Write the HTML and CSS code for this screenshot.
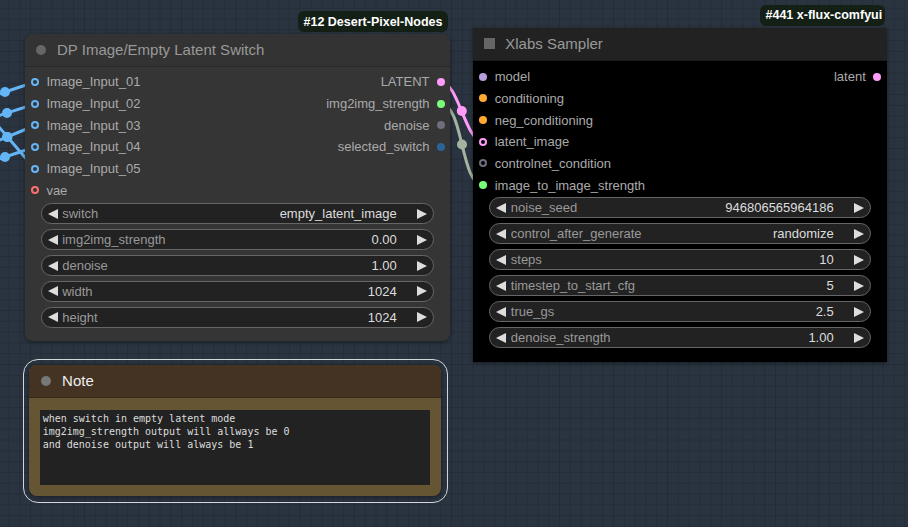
FILE: index.html
```html
<!DOCTYPE html>
<html>
<head>
<meta charset="utf-8">
<link rel="stylesheet" href="styles.css">
</head>
<body>
<div class="canvas">
  <svg class="wires" width="908" height="527" viewBox="0 0 908 527">
    <g fill="none" stroke-width="3" stroke-linecap="round">
      <path d="M-25 102 L35 82" stroke="#64b5f6"/>
      <path d="M-21 122 L35 104" stroke="#64b5f6"/>
      <path d="M-21 148.5 L35 125.5" stroke="#64b5f6"/>
      <path d="M-25 167 L35 147" stroke="#64b5f6"/>
      <path d="M-20 105 L35 169" stroke="#64b5f6"/>
      <path d="M440.7 82 C458.7 82 465 141.7 483.3 141.7" stroke="#ff9cf9"/>
      <path d="M440.7 104 C463.7 104 460.3 185.3 483.3 185.3" stroke="#a3b39e"/>
    </g>
    <g>
      <circle cx="5" cy="92" r="5" fill="#64b5f6"/>
      <circle cx="7" cy="113" r="5" fill="#64b5f6"/>
      <circle cx="7" cy="137" r="5" fill="#64b5f6"/>
      <circle cx="7.5" cy="137" r="5" fill="#64b5f6"/>
      <circle cx="5" cy="157" r="5" fill="#64b5f6"/>
      <circle cx="461.8" cy="111" r="5" fill="#ff9cf9"/>
      <circle cx="462" cy="144.5" r="5" fill="#a3b39e"/>
    </g>
  </svg>

  <div class="badge badge-dp">#12 Desert-Pixel-Nodes</div>
  <div class="node node-dp">
    <div class="node-title"><span class="title-dot"></span><span class="title-text">DP Image/Empty Latent Switch</span></div>
    <div class="node-body">
      <div class="slots">
        <div class="col-in">
          <div class="slot"><span class="pin ring c-image"></span>Image_Input_01</div>
          <div class="slot"><span class="pin ring c-image"></span>Image_Input_02</div>
          <div class="slot"><span class="pin ring c-image"></span>Image_Input_03</div>
          <div class="slot"><span class="pin ring c-image"></span>Image_Input_04</div>
          <div class="slot"><span class="pin ring c-image"></span>Image_Input_05</div>
          <div class="slot"><span class="pin ring c-vae"></span>vae</div>
        </div>
        <div class="col-out">
          <div class="slot out">LATENT<span class="pin c-latent"></span></div>
          <div class="slot out">img2img_strength<span class="pin c-float"></span></div>
          <div class="slot out">denoise<span class="pin c-grey"></span></div>
          <div class="slot out">selected_switch<span class="pin c-blue"></span></div>
        </div>
      </div>
      <div class="widgets w-dp">
        <div class="widget"><span class="arr-l"></span><span class="w-label">switch</span><span class="w-value">empty_latent_image</span><span class="arr-r"></span></div>
        <div class="widget"><span class="arr-l"></span><span class="w-label">img2img_strength</span><span class="w-value">0.00</span><span class="arr-r"></span></div>
        <div class="widget"><span class="arr-l"></span><span class="w-label">denoise</span><span class="w-value">1.00</span><span class="arr-r"></span></div>
        <div class="widget"><span class="arr-l"></span><span class="w-label">width</span><span class="w-value">1024</span><span class="arr-r"></span></div>
        <div class="widget"><span class="arr-l"></span><span class="w-label">height</span><span class="w-value">1024</span><span class="arr-r"></span></div>
      </div>
    </div>
  </div>

  <div class="badge badge-xf">#441 x-flux-comfyui</div>
  <div class="node node-xl">
    <div class="node-title"><span class="title-square"></span><span class="title-text">Xlabs Sampler</span></div>
    <div class="node-body">
      <div class="slots">
        <div class="col-in">
          <div class="slot"><span class="pin c-model"></span>model</div>
          <div class="slot"><span class="pin c-cond"></span>conditioning</div>
          <div class="slot"><span class="pin c-cond"></span>neg_conditioning</div>
          <div class="slot"><span class="pin ring c-latent"></span>latent_image</div>
          <div class="slot"><span class="pin ring c-grey"></span>controlnet_condition</div>
          <div class="slot"><span class="pin c-float"></span>image_to_image_strength</div>
        </div>
        <div class="col-out">
          <div class="slot out">latent<span class="pin c-latent"></span></div>
        </div>
      </div>
      <div class="widgets w-xl">
        <div class="widget"><span class="arr-l"></span><span class="w-label">noise_seed</span><span class="w-value">946806565964186</span><span class="arr-r"></span></div>
        <div class="widget"><span class="arr-l"></span><span class="w-label">control_after_generate</span><span class="w-value">randomize</span><span class="arr-r"></span></div>
        <div class="widget"><span class="arr-l"></span><span class="w-label">steps</span><span class="w-value">10</span><span class="arr-r"></span></div>
        <div class="widget"><span class="arr-l"></span><span class="w-label">timestep_to_start_cfg</span><span class="w-value">5</span><span class="arr-r"></span></div>
        <div class="widget"><span class="arr-l"></span><span class="w-label">true_gs</span><span class="w-value">2.5</span><span class="arr-r"></span></div>
        <div class="widget"><span class="arr-l"></span><span class="w-label">denoise_strength</span><span class="w-value">1.00</span><span class="arr-r"></span></div>
      </div>
    </div>
  </div>

  <div class="selected">
    <div class="node node-note">
      <div class="node-title"><span class="title-dot"></span><span class="title-text">Note</span></div>
      <div class="node-body">
        <div class="note-text">when switch in empty latent mode
img2img_strength output will allways be 0
and denoise output will always be 1</div>
      </div>
    </div>
  </div>
</div>
</body>
</html>
```

FILE: styles.css
```css
* { box-sizing: border-box; }
html, body { margin: 0; padding: 0; }
body {
  width: 908px;
  height: 527px;
  overflow: hidden;
  font-family: "Liberation Sans", Arial, sans-serif;
}
.canvas {
  position: relative;
  width: 908px;
  height: 527px;
  background-color: #2a3440;
  background-image:
    linear-gradient(#242d37 1px, transparent 1px),
    linear-gradient(90deg, #242d37 1px, transparent 1px);
  background-size: 10.8px 10.8px;
  background-position: 8.4px 7.7px;
  overflow: hidden;
}
.wires { position: absolute; left: 0; top: 0; }

.badge {
  position: absolute;
  height: 21px;
  padding: 0 6px;
  display: flex;
  align-items: center;
  background: #142016;
  color: #fff;
  font-weight: bold;
  font-size: 12.5px;
  border-radius: 6px;
  white-space: nowrap;
}
.badge-dp { left: 297.5px; top: 11px; width: 150px; }
.badge-xf { left: 759.5px; top: 4.5px; width: 125.5px; }

.node {
  position: absolute;
  display: flex;
  flex-direction: column;
}
.node-title {
  display: flex;
  align-items: center;
  flex: none;
  position: relative;
  font-size: 15px;
  color: #999;
  border-bottom: 1px solid rgba(0,0,0,0.2);
}
.title-text { white-space: nowrap; }
.title-dot {
  width: 10px; height: 10px; border-radius: 50%;
  background: #666;
  flex: none;
}
.title-square {
  width: 11px; height: 11px;
  background: #666;
  flex: none;
  margin-left: 11.3px;
  margin-right: 10.3px;
}
.node-body { flex: 1; display: flex; flex-direction: column; }

.node-dp {
  left: 25px; top: 33.5px; width: 425px; height: 307.5px;
  border-radius: 8px;
  background: #353535;
  box-shadow: 0 1px 4px rgba(0,0,0,0.45);
}
.node-dp .node-title {
  height: 33.5px;
  background: #333;
  border-radius: 8px 8px 0 0;
}
.node-dp .title-dot { margin-left: 10.7px; margin-right: 11.3px; }
.node-dp .node-body { padding-top: 4px; }

.node-xl {
  left: 472.7px; top: 28.3px; width: 414.3px; height: 333.4px;
  background: #000;
  box-shadow: 0 1px 4px rgba(0,0,0,0.45);
}
.node-xl .node-title { height: 32.4px; background: #222; }
.node-xl .node-body { padding-top: 5.2px; }

.slots { display: flex; justify-content: space-between; }
.col-in, .col-out { display: flex; flex-direction: column; }
.slot {
  height: 21.7px;
  display: flex;
  align-items: center;
  font-size: 13px;
  color: #aaa;
  white-space: nowrap;
}
.col-in .slot { padding-left: 6px; }
.node-xl .col-in .slot { padding-left: 6.6px; }
.col-in .pin { margin-right: 7.4px; }
.col-out .slot { justify-content: flex-end; padding-right: 5.3px; }
.node-xl .col-out .slot { padding-right: 6px; }
.col-out .pin { margin-left: 7.2px; }
.pin {
  width: 8px; height: 8px; border-radius: 50%;
  flex: none;
  background: var(--c);
}
.pin.ring { background: transparent; border: 2.4px solid var(--c); }
.c-image { --c: #64b5f6; }
.c-vae { --c: #ff6e6e; }
.c-latent { --c: #ff9cf9; }
.c-float { --c: #77ff77; }
.c-grey { --c: #6e6e7c; }
.c-blue { --c: #2a6496; }
.c-model { --c: #b39ddb; }
.c-cond { --c: #ffa931; }

.widgets { display: flex; flex-direction: column; padding: 0 16px; }
.w-dp { margin-top: 2.3px; gap: 4.8px; padding-left: 15.7px; }
.w-xl { margin-top: 1.2px; gap: 5px; padding-left: 16.6px; }
.widget {
  height: 21px;
  display: flex;
  align-items: center;
  background: #222;
  border: 1px solid #666;
  border-radius: 11px;
  font-size: 13px;
  white-space: nowrap;
}
.arr-l, .arr-r {
  width: 0; height: 0;
  border-top: 5px solid transparent;
  border-bottom: 5px solid transparent;
  flex: none;
}
.arr-l { border-right: 10.5px solid #ddd; margin-left: 6px; }
.arr-r { border-left: 10.5px solid #ddd; margin-right: 5.7px; }
.w-label { color: #999; margin-left: 4.5px; flex: 1; }
.w-value { color: #ddd; margin-right: 20.6px; }

.selected {
  position: absolute;
  left: 23.3px; top: 359px;
  width: 425px; height: 144.3px;
  border: 1.5px solid #d2d6da;
  border-radius: 15px;
  padding: 4.5px 5.1px;
}
.node-note {
  position: static;
  width: 411.7px; height: 131.7px;
  border-radius: 8px;
  background: #665533;
  box-shadow: 0 1px 4px rgba(0,0,0,0.45);
}
.node-note .node-title {
  height: 33.3px;
  background: #443322;
  border-radius: 8px 8px 0 0;
  color: #eee;
}
.node-note .title-dot { background: #777; margin-left: 11.7px; margin-right: 11px; }
.node-note .node-body { padding: 12.7px 10.7px 11px 11px; }
.note-text {
  flex: 1;
  background: #222;
  color: #ddd;
  font-family: "DejaVu Sans Mono", monospace;
  font-size: 10px;
  line-height: 13px;
  padding: 1.5px 2.3px;
  white-space: pre;
}
```
